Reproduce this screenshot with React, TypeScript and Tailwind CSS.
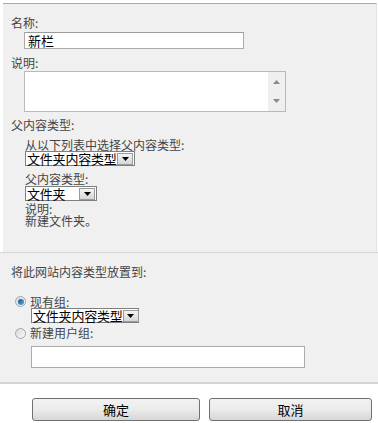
import React from "react";

function DropArrow() {
  return (
    <span className="flex h-[12px] w-[16px] shrink-0 items-center justify-center border border-[#9a9a9a] bg-gradient-to-b from-[#f4f4f4] to-[#d6d6d6]">
      <svg width="7" height="4" viewBox="0 0 7 4">
        <path d="M0 0h7L3.5 4z" fill="#000" />
      </svg>
    </span>
  );
}

function Select({ value, width }: { value: string; width: string }) {
  return (
    <div
      className={`flex h-[15px] items-center justify-between border border-[#7f7f7f] bg-white pl-[1px] pr-[1px] ${width}`}
    >
      <span className="whitespace-nowrap text-[13px] leading-[13px] tracking-[-0.2px] text-black">
        {value}
      </span>
      <DropArrow />
    </div>
  );
}

function Radio({ checked }: { checked: boolean }) {
  return (
    <span className="flex h-[11px] w-[11px] items-center justify-center rounded-full border border-[#a5a5a5] bg-gradient-to-br from-[#d9d9d9] to-[#f9f9f9]">
      {checked && (
        <span className="h-[6px] w-[6px] rounded-full bg-gradient-to-br from-[#1d4f8b] to-[#4ab3e8]" />
      )}
    </span>
  );
}

export default function App() {
  const label = "text-[12px] leading-[14px] text-[#444]";

  return (
    <div className="h-[423px] w-[378px] overflow-hidden bg-white font-['Noto_Sans_CJK_SC',sans-serif]">
      <div className="pl-[3px] pt-[3px] pr-[1px]">
        <div className="h-[249px] border-t border-r border-t-[#ababab] border-r-[#e2e2e2] bg-[#f0f0f0] pl-[8px]">
          <div className={`${label} pt-[12px]`}>名称:</div>
          <div className="ml-[13px] mt-[2px] flex h-[17px] w-[220px] items-center border border-[#ababab] border-t-[#9c9c9c] bg-white pl-[3px] text-[13px] leading-[15px] text-black">
            新栏
          </div>
          <div className={`${label} mt-[7px]`}>说明:</div>
          <div className="ml-[13px] mt-[1px] flex h-[41px] w-[262px] border border-[#b9b9b9] bg-white">
            <div className="flex-1" />
            <div className="flex w-[17px] flex-col items-center justify-between bg-[#efefef] py-[8px]">
              <svg width="7" height="4" viewBox="0 0 7 4">
                <path d="M3.5 0L7 4H0z" fill="#8a8a8a" />
              </svg>
              <svg width="7" height="4" viewBox="0 0 7 4">
                <path d="M0 0h7L3.5 4z" fill="#8a8a8a" />
              </svg>
            </div>
          </div>
          <div className={`${label} mt-[6px]`}>父内容类型:</div>
          <div className="pl-[14px]">
            <div className="mt-[6px] text-[12px] leading-[13px] text-[#444]">
              从以下列表中选择父内容类型:
            </div>
            <Select value="文件夹内容类型" width="w-[110px]" />
            <div className={`${label} mt-[6px]`}>父内容类型:</div>
            <Select value="文件夹" width="w-[72px]" />
            <div className="mt-[2px] text-[12px] leading-[12px] text-[#444]">说明:</div>
            <div className="text-[12px] leading-[12px] text-[#444]">新建文件夹。</div>
          </div>
        </div>
      </div>
      <div className="h-[132px] border-t border-b-2 border-t-[#d6d6d6] border-b-[#d4d4d4] bg-[#f0f0f0] pl-[11px]">
        <div className={`${label} mt-[12px]`}>将此网站内容类型放置到:</div>
        <div className="mt-[16px] flex h-[13px] items-center gap-[4px] pl-[4px]">
          <Radio checked />
          <span className="text-[12px] leading-[13px] text-[#444]">现有组:</span>
        </div>
        <div className="ml-[20px]">
          <Select value="文件夹内容类型" width="w-[108px]" />
        </div>
        <div className="mt-[3px] flex h-[14px] items-center gap-[4px] pl-[4px]">
          <Radio checked={false} />
          <span className="text-[12px] leading-[14px] text-[#444]">新建用户组:</span>
        </div>
        <div className="ml-[20px] mt-[6px] h-[22px] w-[274px] border border-[#ababab] bg-white" />
      </div>
      <div className="mt-[14px] flex gap-[9px] pl-[32px]">
        <button className="h-[23px] w-[168px] rounded-[3px] border border-[#707070] bg-gradient-to-b from-[#f2f2f2] via-[#ebebeb] to-[#d6d6d6] text-[13px] leading-[21px] text-black">
          确定
        </button>
        <button className="h-[23px] w-[163px] rounded-[3px] border border-[#707070] bg-gradient-to-b from-[#f2f2f2] via-[#ebebeb] to-[#d6d6d6] text-[13px] leading-[21px] text-black">
          取消
        </button>
      </div>
    </div>
  );
}
